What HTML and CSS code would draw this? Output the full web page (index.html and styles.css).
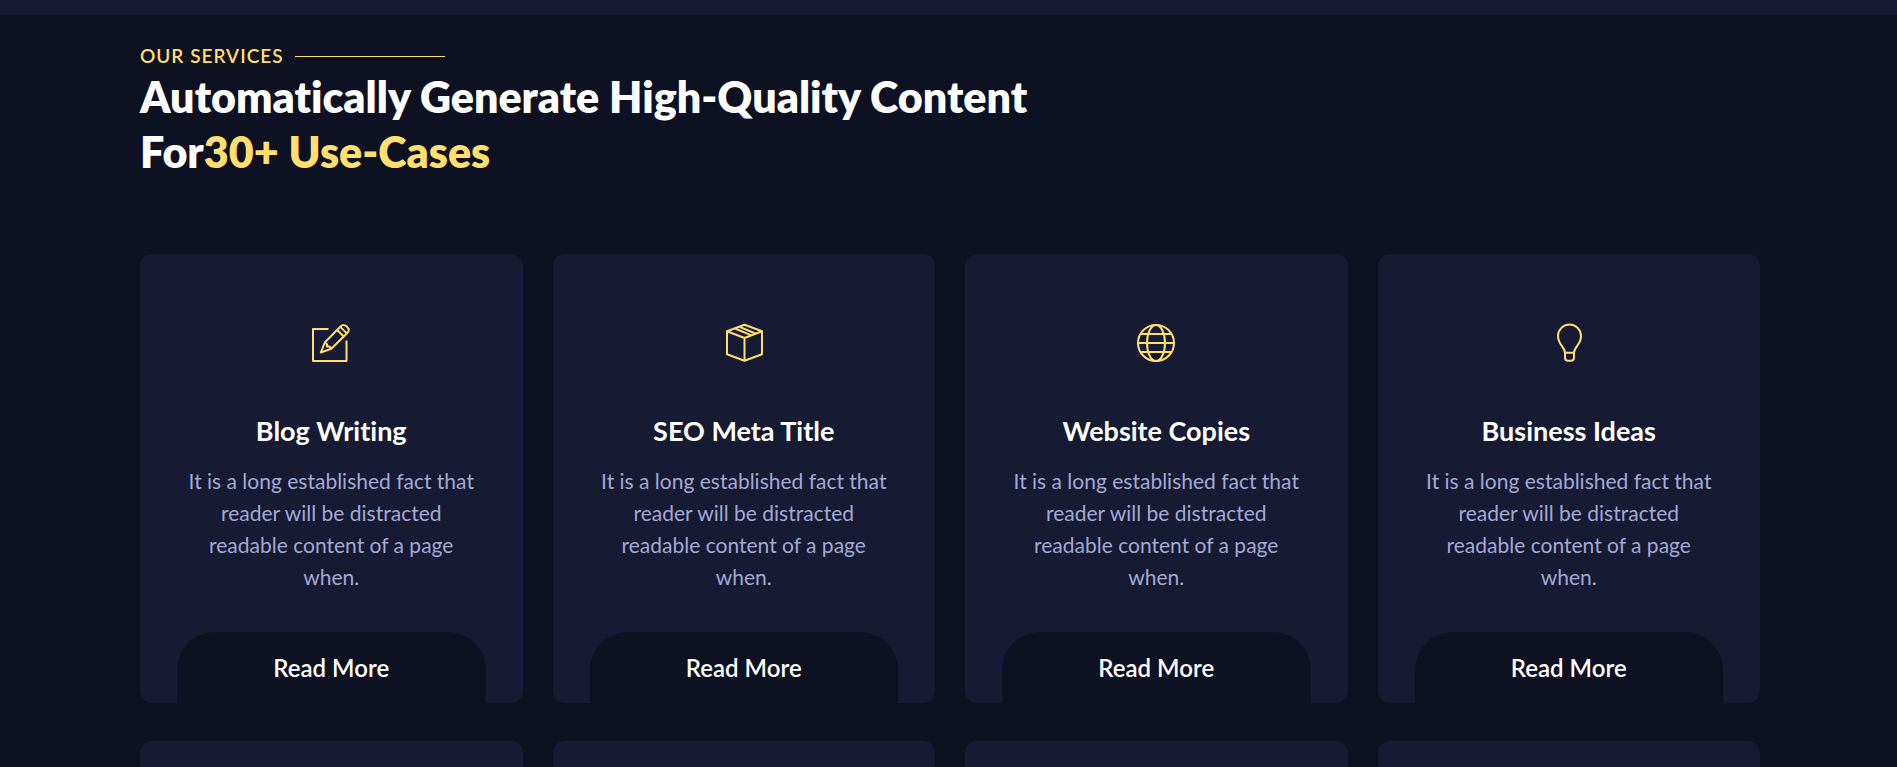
FILE: index.html
```html
<!DOCTYPE html>
<html lang="en">
<head>
<meta charset="utf-8">
<meta name="viewport" content="width=device-width, initial-scale=1">
<title>Our Services</title>
<link rel="stylesheet" href="styles.css">
</head>
<body>
<div class="strip"></div>
<main class="services">
  <header class="heading">
    <p class="eyebrow">OUR SERVICES</p>
    <h1 class="title">Automatically Generate High-Quality Content<br>For<span class="accent">30+ Use-Cases</span></h1>
  </header>
  <div class="grid">
    <article class="card">
      <svg class="icon" viewBox="11 13 40 40" aria-hidden="true"><path d="M28.5 19H13V51H46.500V30.500"/><path d="M20.800 42.500L24.800 32.500L40.500 16.500Q43.500 13.500 46.500 16.300L47.800 17.600Q50 20.300 47.300 23L31.300 38.700Z"/><path d="M24.800 32.500L27 34.300V36.500H29.500L31.300 38.700M37.200 20L43.700 26.500M40.300 16.900L46.800 23.400"/></svg>
      <h2 class="name">Blog Writing</h2>
      <p class="text">It is a long established fact that reader will be distracted readable content of a page when.</p>
      <a class="more" href="#blog">Read More</a>
    </article>
    <article class="card">
      <svg class="icon" viewBox="8 13 40 40" aria-hidden="true"><path d="M28.500 14.800L46 21.300V44.300L28.500 50.800L11 44.300V21.300ZM11 21.300L28.500 28L46 21.300M28.500 28V50.800"/><path d="M19 18.500L35 25.200M23.500 16.800L39.500 23.500"/></svg>
      <h2 class="name">SEO Meta Title</h2>
      <p class="text">It is a long established fact that reader will be distracted readable content of a page when.</p>
      <a class="more" href="#seo">Read More</a>
    </article>
    <article class="card">
      <svg class="icon" viewBox="11 13 40 40" aria-hidden="true"><circle cx="31" cy="33" r="18"/><ellipse cx="31" cy="33" rx="9" ry="18"/><path d="M13 33H49M15.500 24H46.500M15.500 42H46.500"/></svg>
      <h2 class="name">Website Copies</h2>
      <p class="text">It is a long established fact that reader will be distracted readable content of a page when.</p>
      <a class="more" href="#website">Read More</a>
    </article>
    <article class="card">
      <svg class="icon" viewBox="8 13 40 40" aria-hidden="true"><path d="M24 42.800C24 37.500 17 34.500 17 26A11.500 11.500 0 0 1 40 26C40 34.500 33 37.500 33 42.800ZM24 42.800V47.800Q24 50.800 27 50.800H30Q33 50.800 33 47.800V42.800"/></svg>
      <h2 class="name">Business Ideas</h2>
      <p class="text">It is a long established fact that reader will be distracted readable content of a page when.</p>
      <a class="more" href="#business">Read More</a>
    </article>
  </div>
  <div class="grid next">
    <div class="peek"></div>
    <div class="peek"></div>
    <div class="peek"></div>
    <div class="peek"></div>
  </div>
</main>
</body>
</html>
```
FILE: styles.css
```css
* { box-sizing: border-box; }

body {
  margin: 0;
  min-height: 100vh;
  display: flex;
  flex-direction: column;
  background: #0e1122;
  color: #fff;
  font-family: Lato, "Open Sans", sans-serif;
  font-variant-ligatures: none;
}

.strip {
  height: 15px;
  background: #161a33;
}

.services {
  flex: 1;
  display: flex;
  flex-direction: column;
  padding: 28px 137px 0 140px;
}

.heading { margin-bottom: 75px; }

.eyebrow {
  display: flex;
  align-items: center;
  gap: 11px;
  margin: 0;
  color: #ffdf6d;
  font-size: 19px;
  font-weight: 600;
  line-height: 26px;
  letter-spacing: 1px;
}

.eyebrow::after {
  content: "";
  width: 150px;
  height: 1px;
  background: #ffdf6d;
}

.title {
  margin: 0;
  font-size: 43px;
  font-weight: 800;
  line-height: 55px;
}

.accent { color: #ffdf6d; }

.grid {
  display: grid;
  grid-template-columns: repeat(4, 1fr);
  gap: 30px;
}

.card {
  display: flex;
  flex-direction: column;
  align-items: center;
  padding: 69px 37px 0;
  border-radius: 12px;
  background: #161a33;
  text-align: center;
}

.icon {
  width: 40px;
  height: 40px;
  fill: none;
  stroke: #ffdf6d;
  stroke-width: 2;
  stroke-linejoin: round;
}

.name {
  margin: 50px 0 16px;
  font-size: 27px;
  font-weight: 700;
  line-height: 36px;
}

.text {
  margin: 0 0 39px;
  padding: 0 6px;
  color: #a4a8d5;
  font-size: 21px;
  line-height: 32px;
}

.more {
  width: 100%;
  padding: 18px;
  border-radius: 38px 38px 0 0;
  background: #0e1122;
  color: #fff;
  font-size: 24px;
  font-weight: 600;
  line-height: 35px;
  text-decoration: none;
}

.next {
  flex: 1;
  margin-top: 38px;
}

.peek {
  min-height: 24px;
  border-radius: 12px 12px 0 0;
  background: #161a33;
}
```
